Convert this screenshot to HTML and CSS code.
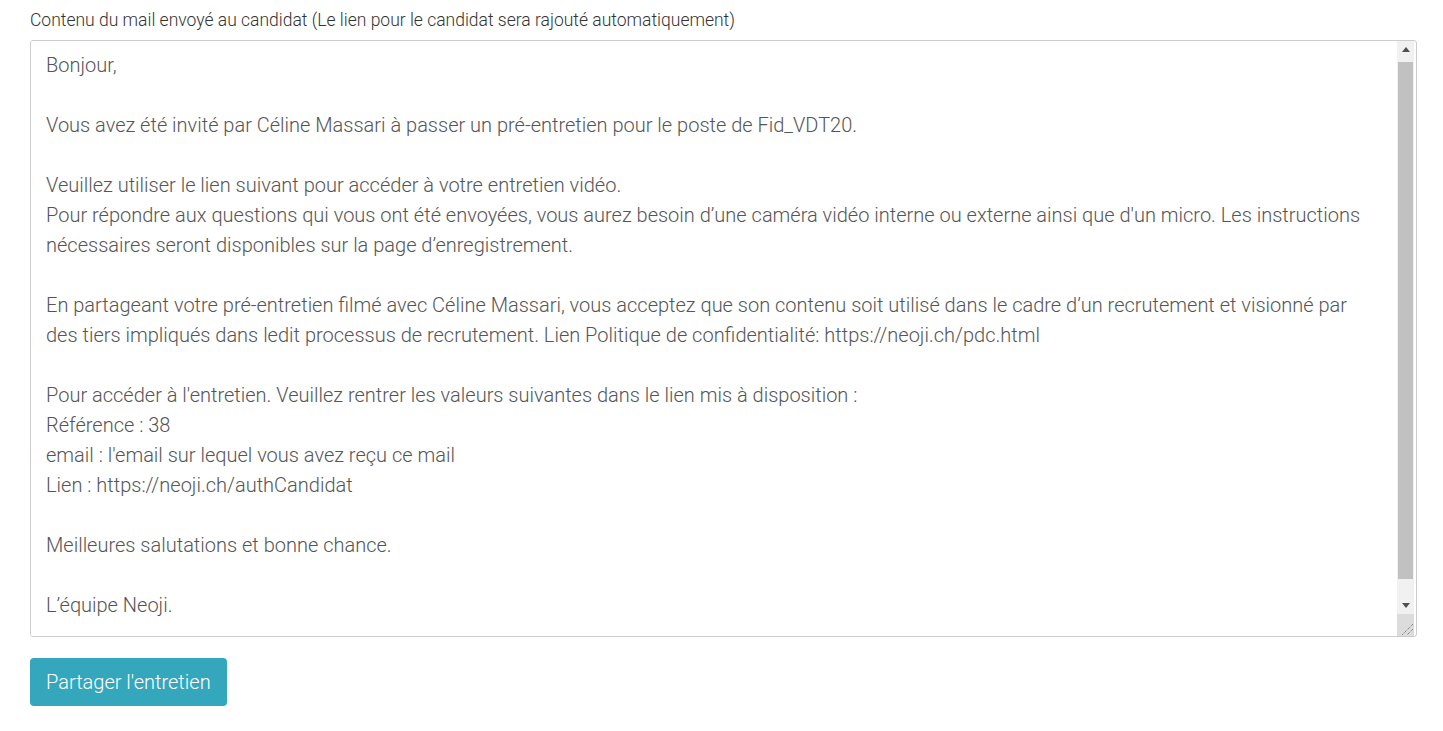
FILE: index.html
```html
<!DOCTYPE html>
<html lang="fr">
<head>
    <meta charset="UTF-8">
    <title>Partager l'entretien</title>
    <link rel="stylesheet" href="styles.css">
</head>
<body>
<div class="share-form">
    <label class="share-label" for="mailContent">Contenu du mail envoyé au candidat (Le lien pour le candidat sera rajouté automatiquement)</label>
    <div class="mail-box">
        <textarea id="mailContent" class="mail-content">Bonjour,

Vous avez été invité par Céline Massari à passer un pré-entretien pour le poste de Fid_VDT20.

Veuillez utiliser le lien suivant pour accéder à votre entretien vidéo.
Pour répondre aux questions qui vous ont été envoyées, vous aurez besoin d’une caméra vidéo interne ou externe ainsi que d'un micro. Les instructions nécessaires seront disponibles sur la page d’enregistrement.

En partageant votre pré-entretien filmé avec Céline Massari, vous acceptez que son contenu soit utilisé dans le cadre d’un recrutement et visionné par des tiers impliqués dans ledit processus de recrutement. Lien Politique de confidentialité: https://neoji.ch/pdc.html

Pour accéder à l'entretien. Veuillez rentrer les valeurs suivantes dans le lien mis à disposition :
Référence : 38
email : l'email sur lequel vous avez reçu ce mail
Lien : https://neoji.ch/authCandidat

Meilleures salutations et bonne chance.

L’équipe Neoji.
</textarea>
        <div class="scrollbar">
            <div class="sb-btn"><span class="arrow-up"></span></div>
            <div class="sb-track"><div class="sb-thumb"></div></div>
            <div class="sb-btn"><span class="arrow-down"></span></div>
            <div class="sb-corner">
                <svg width="14" height="14" viewBox="0 0 14 14">
                    <path d="M13 2 L2 13 M13 7 L7 13" stroke="#666" stroke-width="1" stroke-dasharray="1 1"/>
                </svg>
            </div>
        </div>
    </div>
    <button class="btn-share" type="button">Partager l'entretien</button>
</div>
</body>
</html>
```

FILE: styles.css
```css
html,body{
    margin:0;
    background:#fff;
    font-family:Roboto,"Liberation Sans",sans-serif;
}
.share-form{
    display:flex;
    flex-direction:column;
    align-items:flex-start;
    padding:10px 26px 0 30px;
}
.share-label{
    font-size:17.5px;
    font-weight:300;
    line-height:20px;
    color:#333;
    margin-bottom:10px;
}
.mail-box{
    display:flex;
    width:1387px;
    height:597px;
    box-sizing:border-box;
    border:1px solid #ccc;
    border-radius:3px;
    overflow:hidden;
}
.mail-content{
    flex:1;
    padding:9px 15px 11px;
    border:none;
    font-family:Roboto,"Liberation Sans",sans-serif;
    font-size:20px;
    font-weight:300;
    line-height:30px;
    color:#555;
    overflow:hidden;
    resize:none;
    outline:none;
}
.scrollbar{
    width:17px;
    margin-right:2px;
    display:flex;
    flex-direction:column;
    background:#f1f1f1;
}
.sb-btn{
    height:17px;
    display:flex;
    align-items:center;
    justify-content:center;
}
.arrow-up,.arrow-down{
    width:0;
    height:0;
    border-left:4px solid transparent;
    border-right:4px solid transparent;
}
.arrow-up{
    border-bottom:5px solid #505050;
}
.arrow-down{
    border-top:5px solid #505050;
}
.sb-track{
    flex:1;
    padding:4px 1px 18px 1px;
    display:flex;
}
.sb-thumb{
    flex:1;
    background:#c1c1c1;
}
.sb-corner{
    height:22px;
    background:#dcdcdc;
    display:flex;
    align-items:flex-end;
    justify-content:flex-end;
}
.btn-share{
    margin-top:21px;
    height:48px;
    padding:0 16px;
    border:none;
    border-radius:4px;
    background:#35a7bc;
    color:#fff;
    font-family:Roboto,"Liberation Sans",sans-serif;
    font-size:20px;
    font-weight:300;
    cursor:pointer;
}
```
